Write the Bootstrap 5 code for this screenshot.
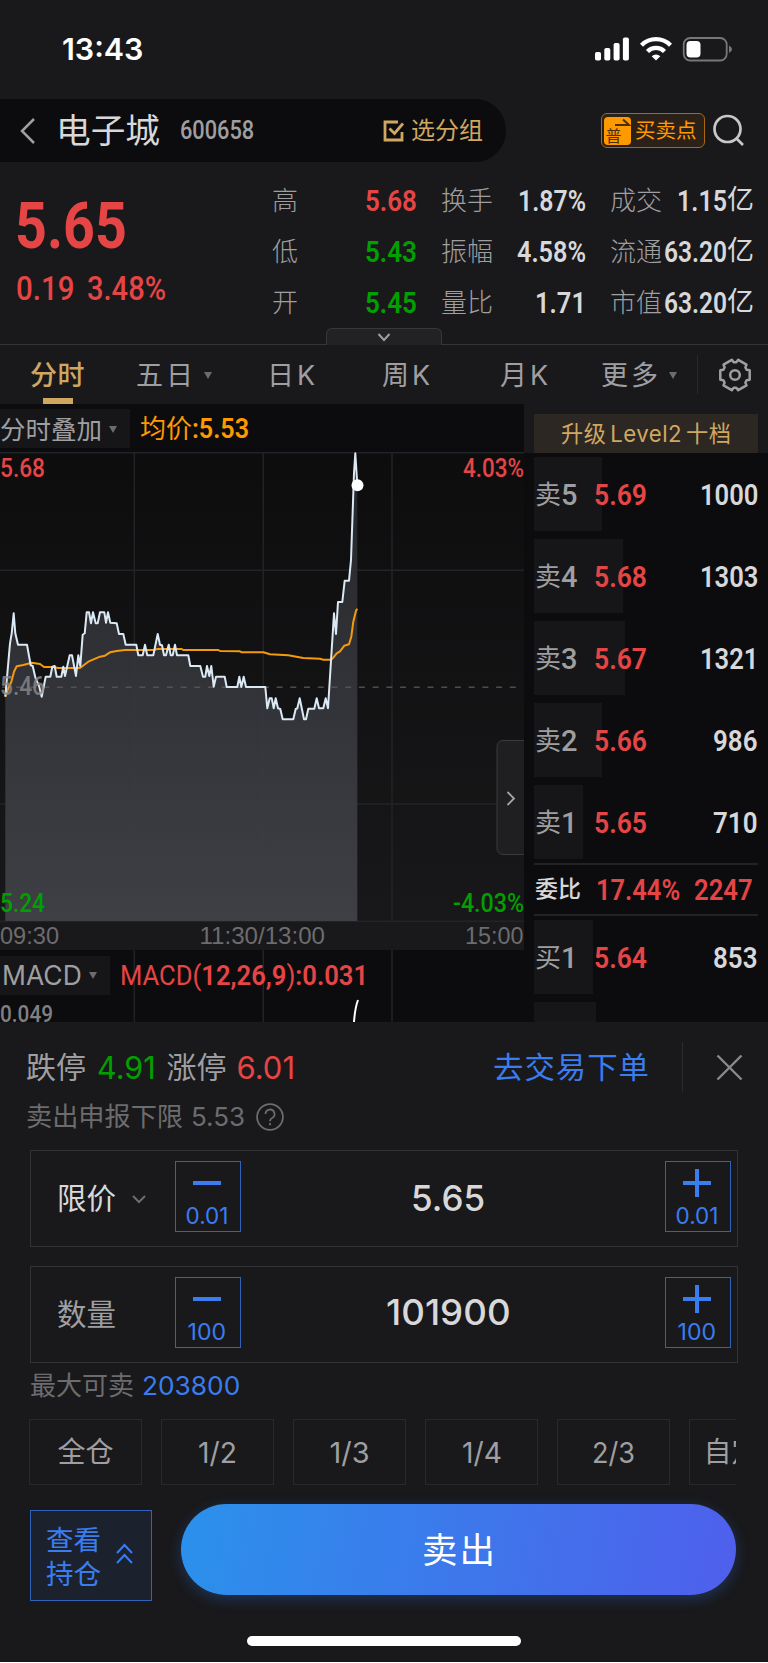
<!DOCTYPE html>
<html lang="zh-CN">
<head>
<meta charset="utf-8">
<meta name="viewport" content="width=device-width, initial-scale=1">
<title>电子城 600658</title>
<link href="https://cdn.jsdelivr.net/npm/bootstrap@5.3.0/dist/css/bootstrap.min.css" rel="stylesheet">
<style>
  :root { --up:#e64545; --down:#00a000; --gold:#cfa761; --amber:#ff9900; --blue:#3a7df0; --grey:#9f9fa1; --dim:#6c6c6f; --pale:#d8d8da; --panel:#19191b; --ink:#0c0c0e; }
  html, body { height:1663px; overflow:hidden; }
  body { font-family:Inter,"Noto Sans CJK SC",sans-serif; line-height:1; background:#fff; color:var(--grey); }
  .app { width:768px; height:1662px; background:var(--panel); overflow:hidden; }
  svg { display:block; flex:none; }
  .fit { display:inline-block; white-space:nowrap; transform-origin:0 50%; flex:none; }
  .din { font-family:Roboto,"Noto Sans CJK SC",sans-serif; font-weight:600; }
  .up { color:var(--up); } .down { color:var(--down); } .gold { color:var(--gold); } .blue { color:var(--blue); } .pale { color:var(--pale); } .dim { color:var(--dim); }

  .statusbar { height:99px; padding:0 36px 2px 62px; }
  .clock { font-size:30px; font-weight:600; color:#fff; }
  .titlebar { height:63px; padding-right:24px; }
  .title-pill { width:506px; height:63px; background:var(--ink); border-radius:0 31px 31px 0; padding:0 23px 0 20px; }
  .stock-name { font-size:34px; margin-left:21px; }
  .stock-code { font-size:25px; margin-left:20px; font-weight:500; }
  .group-label { font-size:24px; margin-left:6px; }
  .searchbox { gap:8px; }
  .trade-badge { width:104px; height:35px; border:1.5px solid #a8690f; border-radius:6px; background:#2c2118; color:var(--amber); padding-left:2px; }
  .trade-badge span { font-size:20.5px; margin-left:4px; padding-top:2px; }

  .quote { height:183px; border-bottom:1px solid #353537; position:relative; }
  .quote-main { width:272px; padding:32px 0 0 15px; }
  .last { font-size:65px; height:64px; font-weight:700; }
  .change { font-size:33.5px; height:34px; margin:14px 0 0 1px; font-weight:500; gap:13px; }
  .stats { padding-top:13px; }
  .stat-row { display:grid; grid-template-columns:26px 119px 76px 93px 76px 92px; height:51.2px; align-items:center; font-size:26px; }
  .stat-row .k { text-align:right; font-weight:300; }
  .stat-row .v { display:flex; justify-content:flex-end; align-items:center; font-size:30px; }
  .stat-row .v i { font-style:normal; font-size:27px; font-weight:400; }
  .expander { position:absolute; left:326px; bottom:-1px; width:116px; height:17px; background:#222224; border:1px solid #38383a; border-bottom:0; border-radius:6px 6px 0 0; }

  .tabs { height:59px; display:grid; grid-template-columns:106px 131px 115px 118px 101px 96px 1fr; padding-left:30px; align-items:center; font-size:27px; }
  .tabs .tab { height:59px; display:flex; align-items:center; letter-spacing:3px; position:relative; padding-top:2px; }
  .tabs .on { color:var(--gold); letter-spacing:.5px; font-weight:500; }
  .tabs .on::after { content:""; position:absolute; left:13px; bottom:0; width:30px; height:6px; background:var(--gold); }
  .caret { width:0; height:0; border:4px solid transparent; border-top:7px solid #6c6c6f; border-bottom:0; flex:none; }
  .gearcell { border-left:1px solid #29292b; height:39px; padding-left:20px; }

  .market { height:618px; }
  .chart { width:524px; height:618px; background:var(--ink); position:relative; }
  .chart-tag { position:absolute; left:0; background:#161618; display:flex; align-items:center; gap:7px; }
  .overlay-tag { top:5px; width:130px; height:39px; font-size:25.5px; padding-top:2px; }
  .macd-tag { top:552px; width:110px; height:39px; font-size:26.5px; padding-left:2px; }
  .book { width:244px; height:618px; overflow:hidden; background:var(--ink); }
  .book-head { height:49px; background:var(--panel); padding:10px 10px 0; }
  .level2 { height:39px; background:#2c2722; font-size:23px; padding-top:2px; word-spacing:-3px; letter-spacing:.5px; }
  .asks { padding-top:4px; }
  .depth { height:74px; margin:0 10px 8px; position:relative; }
  .depth .bar { position:absolute; inset:0 auto 0 0; background:#161618; }
  .depth .cells { position:relative; height:76px; display:grid; grid-template-columns:59px 80px 1fr; align-items:center; font-size:30px; padding-left:1px; }
  .depth .k { font-size:26px; display:flex; align-items:center; }
  .depth .k b { font-size:29px; font-weight:500; }
  .imbalance { height:53px; margin:-4px 10px 4px; border-top:2px solid #232326; border-bottom:2px solid #232326; display:grid; grid-template-columns:61px 98px 1fr; align-items:center; font-size:30px; padding-left:1px; }
  .imbalance .name { font-size:23px; font-weight:500; }

  .ticket { padding:0 31px 0 30px; }
  .limits { height:50px; margin:20px -31px 0 -4px; font-size:30px; }
  .limits .num { font-size:31px; }
  .go { margin-left:198px; letter-spacing:1px; }
  .rule { width:1px; height:50px; background:#2b2b2d; margin-left:32px; }
  .hint { height:34px; margin:8px 0 0 -4px; font-size:26px; }
  .stepper { height:97px; width:708px; border:1px solid #323234; display:grid; grid-template-columns:144px 66px 1fr 66px; padding-right:6px; align-items:center; }
  .stepper + .stepper { margin-top:19px; }
  .stepper .name { padding-left:26px; font-size:29.5px; display:flex; align-items:center; gap:16px; padding-top:1px; }
  .stepper .amount { font-size:35.5px; font-weight:500; text-align:center; padding-right:10px; }
  .step { height:71px; margin-top:-5px; border:1px solid #2f62b8; background:none; padding:0 2px 0 0; color:var(--blue); }
  .step svg { margin:5px auto 8px; }
  .step .fit { display:table; margin:auto; font-size:22.5px; transform-origin:50% 50%; }
  .maxrow { height:34px; margin-top:6px; font-size:26px; }
  .quick { width:707px; margin:16px 0 0 -1px; overflow:hidden; display:flex; gap:19px; }
  .quick .opt { flex:none; width:113px; height:66px; border:1px solid #29292b; font-size:28px; display:flex; align-items:center; justify-content:center; }
  .quick .fit { font-size:29px; }
  .holdings { width:122px; height:91px; margin-top:6px; border:1px solid #2f62b8; background:#1b222e; font-size:27.5px; line-height:34px; padding:2px 0 0 15px; gap:15px; }
  .holdings svg { margin-top:-5px; }
  .sell { width:555px; height:91px; margin-left:29px; border:0; border-radius:46px; background:linear-gradient(100deg,#2b91eb,#4f5fec); box-shadow:0 4px 14px rgba(44,110,220,.32); color:#fff; font-size:35.5px; letter-spacing:2px; padding:3px 0 0 2px; }
  .homebar { width:274px; height:10px; border-radius:5px; background:#fff; margin:35px 0 0 247px; }
</style>
</head>
<body>
<div class="app">
  <div class="statusbar d-flex align-items-center justify-content-between">
    <span class="clock fit" data-w="81">13:43</span>
    <svg width="137" height="26" viewBox="595 36 137 26">
      <g fill="#fff">
        <rect x="595" y="52" width="6" height="8.5" rx="1.8"/><rect x="604.3" y="48" width="6" height="12.5" rx="1.8"/><rect x="613.6" y="43" width="6" height="17.5" rx="1.8"/><rect x="622.9" y="37.5" width="6" height="23" rx="1.8"/>
        <path d="M656 60.500l-4.300-4.300a6 6 0 0 1 8.600 0z"/>
      </g>
      <g fill="none" stroke="#fff" stroke-width="4.3"><path d="M647.500 51.500a12 12 0 0 1 17 0"/><path d="M641.500 45.200a20.500 20.500 0 0 1 29 0"/></g>
      <rect x="683.7" y="38" width="43" height="22.5" rx="6.5" fill="none" stroke="#77777a" stroke-width="1.8"/>
      <rect x="686.5" y="41" width="14" height="16.5" rx="4" fill="#fff"/>
      <path d="M729 45.500q3 1.500 3 3.800t-3 3.800z" fill="#77777a"/>
    </svg>
  </div>

  <header class="titlebar d-flex align-items-center justify-content-between">
    <div class="title-pill d-flex align-items-center">
      <svg width="15" height="26" viewBox="0 0 15 26" fill="none" stroke="#9f9fa1" stroke-width="2.5"><path d="M14 1L2 13l12 12"/></svg>
      <span class="stock-name pale fit" data-w="104">电子城</span>
      <span class="stock-code din fit" data-w="74">600658</span>
      <svg class="ms-auto" width="22" height="22" viewBox="0 0 22 22" fill="none" stroke="#cfa761" stroke-width="2.8"><path d="M15 2H2v18h17V12M6.500 8.500l5 5L20 3.500"/></svg>
      <span class="group-label gold">选分组</span>
    </div>
    <div class="searchbox d-flex align-items-center">
      <div class="trade-badge d-flex align-items-center">
        <svg width="27" height="28" viewBox="0 0 27 28"><rect width="27" height="28" rx="4" fill="#ff9900"/><path d="M11 8h14l-6-5.500" fill="none" stroke="#4a3010" stroke-width="2"/><text x="1.5" y="24.5" font-size="16" fill="#4a3010">普</text></svg>
        <span>买卖点</span>
      </div>
      <svg width="31" height="33" viewBox="0 0 31 33" fill="none" stroke="#c8c8ca" stroke-width="2.7"><circle cx="14.5" cy="15" r="13"/><path d="M23.500 24.500l6.500 6.500"/></svg>
    </div>
  </header>

  <section class="quote d-flex">
    <div class="quote-main din up">
      <div class="last"><span class="fit" data-w="112">5.65</span></div>
      <div class="change d-flex"><span class="fit" data-w="58">0.19</span><span class="fit" data-w="79">3.48%</span></div>
    </div>
    <div class="stats">
      <div class="stat-row"><span class="k">高</span><span class="v din up"><span class="fit" data-w="52">5.68</span></span><span class="k">换手</span><span class="v din pale"><span class="fit" data-w="68">1.87%</span></span><span class="k">成交</span><span class="v din pale"><span class="fit" data-w="50">1.15</span><i>亿</i></span></div>
      <div class="stat-row"><span class="k">低</span><span class="v din down"><span class="fit" data-w="52">5.43</span></span><span class="k">振幅</span><span class="v din pale"><span class="fit" data-w="69">4.58%</span></span><span class="k">流通</span><span class="v din pale"><span class="fit" data-w="63">63.20</span><i>亿</i></span></div>
      <div class="stat-row"><span class="k">开</span><span class="v din down"><span class="fit" data-w="52">5.45</span></span><span class="k">量比</span><span class="v din pale"><span class="fit" data-w="51">1.71</span></span><span class="k">市值</span><span class="v din pale"><span class="fit" data-w="63">63.20</span><i>亿</i></span></div>
    </div>
    <div class="expander d-flex justify-content-center align-items-center"><svg width="14" height="9" viewBox="0 0 14 9" fill="none" stroke="#9f9fa1" stroke-width="2"><path d="M1.500 1L7 7l5.500-6"/></svg></div>
  </section>

  <nav class="tabs">
    <div class="tab on">分时</div>
    <div class="tab">五日<span class="caret ms-2"></span></div>
    <div class="tab">日K</div>
    <div class="tab">周K</div>
    <div class="tab">月K</div>
    <div class="tab">更多<span class="caret ms-2"></span></div>
    <div class="gearcell d-flex align-items-center"><svg width="34" height="34" viewBox="-17 -17 34 34" fill="none" stroke="#9f9fa1" stroke-width="2.5" stroke-linejoin="round"><path d="M14.700-4.800V4.800L11.700 5.200L10.400 7.500L11.500 10.400L3.200 15.200L1.300 12.700H-1.300L-3.200 15.200L-11.500 10.400L-10.400 7.500L-11.700 5.200L-14.700 4.800V-4.800L-11.700-5.200L-10.400-7.500L-11.500-10.400L-3.200-15.200L-1.300-12.700H1.300L3.200-15.200L11.500-10.400L10.400-7.500L11.700-5.200Z"/><circle r="4.8"/></svg></div>
  </nav>

  <section class="market d-flex">
    <div class="chart">
      <svg width="524" height="618" viewBox="0 404 524 618">
        <defs>
          <linearGradient id="plot" x1="0" y1="0" x2="0" y2="1"><stop offset="0" stop-color="#0d0d0e"/><stop offset="1" stop-color="#18181a"/></linearGradient>
          <linearGradient id="area" gradientUnits="userSpaceOnUse" x1="0" y1="453" x2="0" y2="921"><stop offset="0" stop-color="#27282b" stop-opacity=".92"/><stop offset=".5" stop-color="#35363b" stop-opacity=".92"/><stop offset="1" stop-color="#404247" stop-opacity=".94"/></linearGradient>
        </defs>
        <rect y="453" width="524" height="468" fill="url(#plot)"/>
        <path stroke="#222326" stroke-width="1.5" d="M0 452.700H524M0 570.300H524M0 804H524M0 921.300H524M134.300 453V1022M263.300 453V1022M392 453V1022"/>
        <rect y="922" width="524" height="28" fill="#19191b"/>
        <path id="fill" fill="url(#area)"/>
        <path d="M2.200 687.300H522" stroke="#58585a" stroke-width="1.4" stroke-dasharray="6 7.72" opacity=".85"/>
        <path id="avg" fill="none" stroke="#f59a0c" stroke-width="2" stroke-linejoin="round"/>
        <path id="price" fill="none" stroke="#dbe9f5" stroke-width="2" stroke-linejoin="round"/>
        <circle cx="357.5" cy="485.3" r="6" fill="#fff"/>
        <g font-family="Roboto" font-weight="500" font-size="26">
          <text x="0" y="695" fill="#8a8a8c" opacity=".8" textLength="45" lengthAdjust="spacingAndGlyphs">5.46</text>
          <text x="0" y="477" fill="#e64545" textLength="45" lengthAdjust="spacingAndGlyphs">5.68</text>
          <text x="463" y="477" fill="#e64545" textLength="61" lengthAdjust="spacingAndGlyphs">4.03%</text>
          <text x="0" y="912" fill="#00a000" textLength="45" lengthAdjust="spacingAndGlyphs">5.24</text>
          <text x="453" y="912" fill="#00a000" textLength="71" lengthAdjust="spacingAndGlyphs">-4.03%</text>
          <text x="0" y="1021.5" font-size="24" fill="#808083" textLength="53" lengthAdjust="spacingAndGlyphs">0.049</text>
        </g>
        <g font-family="Liberation Sans" font-size="24.5" fill="#6c6c6f">
          <text x="0" y="944" textLength="59" lengthAdjust="spacingAndGlyphs">09:30</text>
          <text x="199.5" y="944" textLength="125.5" lengthAdjust="spacingAndGlyphs">11:30/13:00</text>
          <text x="465" y="944" textLength="58.5" lengthAdjust="spacingAndGlyphs">15:00</text>
        </g>
        <text x="120" y="985" font-family="Roboto" font-size="27" fill="#e64545" textLength="248" lengthAdjust="spacingAndGlyphs">MACD(<tspan font-weight="600">12,26,9</tspan>)<tspan font-weight="600">:0.031</tspan></text>
        <path d="M354 1022q1-14 4-22" fill="none" stroke="#fff" stroke-width="2"/>
        <g font-size="26" fill="#ff9900"><text x="140" y="438" font-family="Inter,'Noto Sans CJK SC'">均价</text><text x="192" y="438" font-family="Roboto" font-weight="600" font-size="28" textLength="57" lengthAdjust="spacingAndGlyphs">:5.53</text></g>
        <path d="M525 740.500H503a6 6 0 0 0-6 6v102a6 6 0 0 0 6 6H525z" fill="#1f1f21" stroke="#3a3a3c"/>
        <path d="M507.500 792l6.500 6.500-6.500 6.500" fill="none" stroke="#a5a5a7" stroke-width="1.8"/>
      </svg>
      <div class="chart-tag overlay-tag"><span class="fit" data-w="102">分时叠加</span><span class="caret"></span></div>
      <div class="chart-tag macd-tag"><span class="fit" data-w="80">MACD</span><span class="caret"></span></div>
    </div>

    <aside class="book">
      <div class="book-head"><div class="level2 gold d-flex align-items-center justify-content-center"><span class="fit" data-w="170">升级 Level2 十档</span></div></div>
      <div id="asks" class="asks"></div>
      <div class="imbalance"><span class="name pale"><span class="fit" data-w="46">委比</span></span><span class="din up"><span class="fit" data-w="84">17.44%</span></span><span class="din up"><span class="fit" data-w="59">2247</span></span></div>
      <div id="bids"></div>
    </aside>
  </section>

  <section class="ticket">
    <div class="limits d-flex align-items-center">
      <span class="fit" data-w="60">跌停</span><span class="fit num down" data-w="59" style="margin-left:11px">4.91</span>
      <span class="fit" data-w="60" style="margin-left:11px">涨停</span><span class="fit num up" data-w="59" style="margin-left:10px">6.01</span>
      <span class="fit go blue" data-w="157">去交易下单</span>
      <span class="rule"></span>
      <svg style="margin-left:33px" width="27" height="27" viewBox="0 0 27 27" stroke="#8a8a8c" stroke-width="2.4"><path d="M1.500 1.500l24 24M25.500 1.500l-24 24"/></svg>
    </div>
    <div class="hint dim d-flex align-items-center"><span class="fit" data-w="157">卖出申报下限</span><span class="fit" data-w="54" style="margin-left:8px">5.53</span>
      <svg style="margin-left:11px" width="28" height="28" viewBox="0 0 28 28" fill="none" stroke="#6c6c6f" stroke-width="1.8"><circle cx="14" cy="14" r="12.9"/><path d="M9.500 11a4.500 4.500 0 1 1 6.600 4c-1.500 .8-2.100 1.500-2.100 3.200"/><path d="M14 20v2.200"/></svg>
    </div>

    <div class="stepper mt-3">
      <div class="name pale"><span>限价</span><svg width="14" height="9" viewBox="0 0 14 9" fill="none" stroke="#6c6c6f" stroke-width="2"><path d="M1 1l6 6 6-6"/></svg></div>
      <button class="step"><svg width="28" height="28" stroke="#3a7df0" stroke-width="4"><path d="M0 14h28"/></svg><span class="fit" data-w="43">0.01</span></button>
      <div class="amount pale"><span class="fit" data-w="74">5.65</span></div>
      <button class="step"><svg width="28" height="28" stroke="#3a7df0" stroke-width="4"><path d="M0 14h28M14 0v28"/></svg><span class="fit" data-w="43">0.01</span></button>
    </div>
    <div class="stepper">
      <div class="name">数量</div>
      <button class="step"><svg width="28" height="28" stroke="#3a7df0" stroke-width="4"><path d="M0 14h28"/></svg><span class="fit" data-w="39">100</span></button>
      <div class="amount pale pb-1"><span class="fit" data-w="125">101900</span></div>
      <button class="step"><svg width="28" height="28" stroke="#3a7df0" stroke-width="4"><path d="M0 14h28M14 0v28"/></svg><span class="fit" data-w="39">100</span></button>
    </div>
    <div class="maxrow d-flex align-items-center"><span class="fit dim" data-w="104">最大可卖</span><span class="fit blue" data-w="98" style="margin-left:8px">203800</span></div>

    <div class="quick">
      <div class="opt">全仓</div><div class="opt"><span class="fit" data-w="39">1/2</span></div><div class="opt"><span class="fit" data-w="40">1/3</span></div><div class="opt"><span class="fit" data-w="40">1/4</span></div><div class="opt"><span class="fit" data-w="43">2/3</span></div><div class="opt">自定义</div>
    </div>

    <div class="d-flex" style="margin-top:19px">
      <div class="holdings blue d-flex align-items-center"><span>查看<br>持仓</span><svg width="17" height="22" viewBox="0 0 17 22" fill="none" stroke="#3a7df0" stroke-width="2"><path d="M1 10l7.500-8 7.500 8M1 20l7.500-8 7.500 8"/></svg></div>
      <button class="sell">卖出</button>
    </div>
  </section>
  <div class="homebar"></div>
</div>

<script src="https://cdn.jsdelivr.net/npm/bootstrap@5.3.0/dist/js/bootstrap.bundle.min.js"></script>
<script>
  // Order book: side, level, price, lots, depth bar width
  const row = ([side, n, p, q, w]) => `<div class="depth"><div class="bar" style="width:${w}px"></div><div class="cells"><span class="k">${side}<b class="din fit" data-w="16">${n}</b></span><span class="din up"><span class="fit" data-w="53">${p}</span></span><span class="din pale text-end"><span class="fit" data-w="${q.length * 14.7}">${q}</span></span></div></div>`;
  document.getElementById('asks').innerHTML = [['卖','5','5.69','1000',68],['卖','4','5.68','1303',89],['卖','3','5.67','1321',91],['卖','2','5.66','986',68],['卖','1','5.65','710',49]].map(row).join('');
  document.getElementById('bids').innerHTML = row(['买','1','5.64','853',59]) + '<div class="depth"><div class="bar" style="width:62px"></div></div>';

  // Intraday series, stored at three units per pixel
  const price = [16,920,30,760,35,730,41,670,46,730,54,764,81,764,92,826,98,828,106,862,118,890,125,920,137,860,151,860,157,830,164,828,170,860,184,860,190,830,195,858,209,796,216,796,228,858,235,796,241,828,248,734,254,730,260,667,267,667,273,700,279,667,287,700,293,700,300,667,313,667,318,698,324,667,331,698,350,700,357,732,370,732,377,764,409,764,415,796,428,796,435,764,442,796,460,796,473,732,480,764,486,766,492,796,498,796,506,764,512,796,518,796,525,764,531,796,565,796,571,828,601,828,609,860,616,860,621,828,628,858,634,828,641,890,648,860,674,860,680,891,712,891,718,860,724,891,731,860,738,891,796,891,802,955,809,925,815,925,821,955,827,925,834,955,841,957,848,988,880,988,887,957,892,955,899,925,912,988,918,988,925,956,943,956,950,925,957,955,970,955,977,925,984,955,1002,670,1008,732,1014,636,1027,636,1034,572,1047,572,1053,510,1062,250,1066,190,1072,285];
  const avg = [16,920,25,895,34,876,42,845,50,829,70,825,95,818,120,822,132,831,160,831,175,834,240,834,265,815,300,800,315,797,330,787,350,783,375,780,465,780,470,777,545,777,550,780,655,780,660,783,720,784,725,787,790,787,810,793,865,796,910,804,960,806,970,809,993,809,1000,803,1010,790,1020,784,1033,767,1047,763,1054,740,1060,695,1068,662,1072,656];
  const line = a => { let d = ''; for (let i = 0; i < a.length; i += 2) d += (i ? 'L' : 'M') + (a[i] / 3).toFixed(1) + ' ' + (390 + a[i + 1] / 3).toFixed(1); return d; };
  document.getElementById('price').setAttribute('d', line(price));
  document.getElementById('avg').setAttribute('d', line(avg));
  document.getElementById('fill').setAttribute('d', line(price) + 'V921H5.300Z');

  document.querySelectorAll('.fit').forEach(el => {
    const want = +el.dataset.w, have = el.offsetWidth;
    el.style.transform = `scaleX(${want / have})`;
    if (!el.parentElement.classList.contains('step')) el.style.marginRight = (want - have) + 'px';
  });
</script>
</body>
</html>
